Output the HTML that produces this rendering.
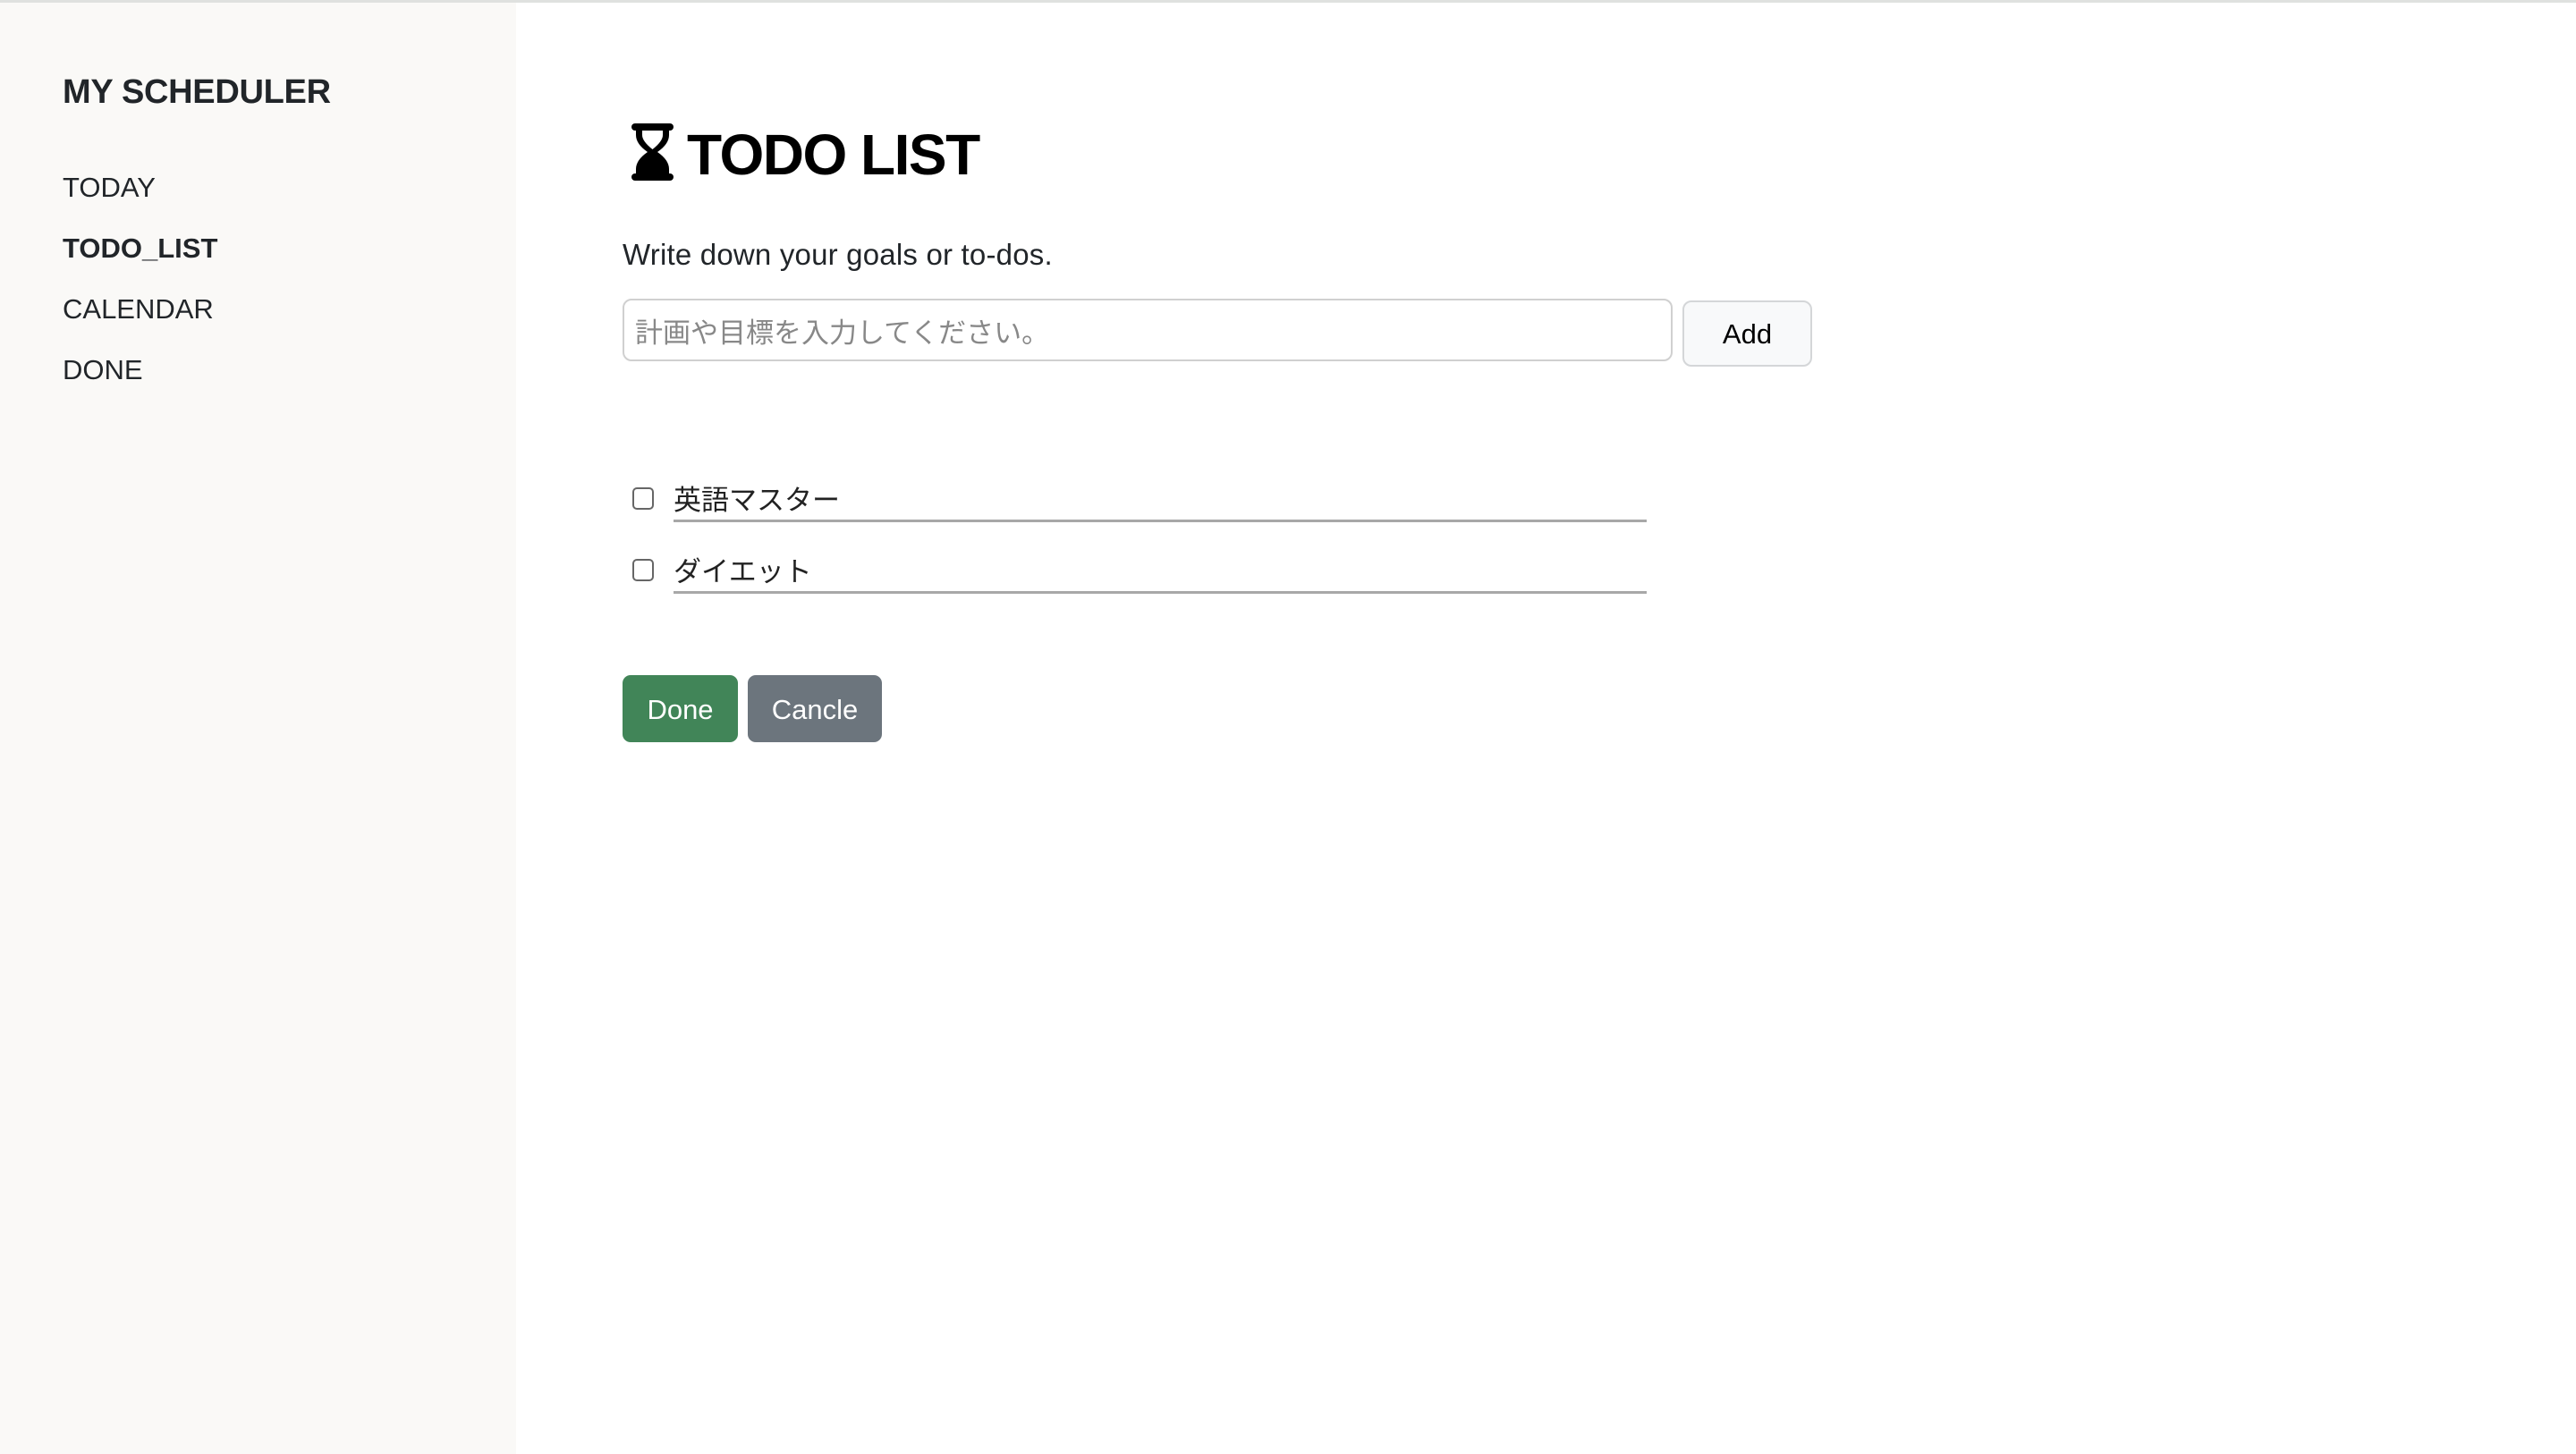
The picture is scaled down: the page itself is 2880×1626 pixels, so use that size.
<!DOCTYPE html>
<html><head><meta charset="utf-8">
<style>
*{box-sizing:border-box;margin:0;padding:0}
html,body{width:2880px;height:1626px;overflow:hidden;background:#fff;font-family:"Liberation Sans","Noto Sans CJK JP",sans-serif;color:#212529}
.top{position:absolute;left:0;top:0;width:2880px;height:3px;background:#dfe1df}
.side{position:absolute;left:0;top:3px;width:577px;height:1623px;background:#faf9f7}
.brand{position:absolute;left:70px;top:82px;font-size:38px;font-weight:bold;letter-spacing:-0.3px}
.nav{position:absolute;left:70px;font-size:31px}
.nav.b{font-weight:bold}
h1{position:absolute;left:768px;top:136px;font-size:64px;font-weight:bold;color:#000;letter-spacing:-1.5px}
.sub{position:absolute;left:696px;top:266px;font-size:33px;letter-spacing:0.2px}
.inp{position:absolute;left:696px;top:334px;width:1174px;height:70px;border:2px solid #d0d0d0;border-radius:10px;font-size:31px;color:#888;padding:11px 0 0 12px}
.add{position:absolute;left:1881px;top:336px;width:145px;height:74px;border:2px solid #d4d6d8;border-radius:10px;background:#f8f9fa;font-size:31px;text-align:center;line-height:72px;color:#000}
.cb{position:absolute;left:707px;width:24px;height:25px;border:2px solid #666;border-radius:5px;background:#fff}
.item{position:absolute;left:753px;font-size:31px;color:#222}
.line{position:absolute;left:753px;width:1088px;height:3px;background:#a8a8a8}
.btn{position:absolute;top:755px;height:75px;border-radius:9px;color:#fff;font-size:31px;text-align:center;line-height:77px}
</style></head><body>
<div class="top"></div>
<div class="side"></div>
<div class="brand">MY SCHEDULER</div>
<div class="nav" style="top:192px">TODAY</div>
<div class="nav b" style="top:260px">TODO_LIST</div>
<div class="nav" style="top:328px">CALENDAR</div>
<div class="nav" style="top:396px">DONE</div>
<svg style="position:absolute;left:705px;top:137px" width="49" height="66" viewBox="0 0 49 66">
<rect x="1" y="1" width="47" height="8" rx="4" fill="#000"/>
<rect x="1" y="57" width="47" height="8" rx="4" fill="#000"/>
<path d="M6 8 L6 14 Q6 24 19 33 Q6 42 6 52 L6 58 L43 58 L43 52 Q43 42 30 33 Q43 24 43 14 L43 8 Z" fill="#000"/>
<path d="M13 9 L13 14 Q13 21 24.5 30 Q36 21 36 14 L36 9 Z" fill="#fff"/>
<path d="M24.5 36 Q13 44 13 52 L14 51 Q24 44 24.5 36 Z" fill="#000"/>
</svg>
<h1>TODO LIST</h1>
<div class="sub">Write down your goals or to-dos.</div>
<div class="inp">計画や目標を入力してください。</div>
<div class="add">Add</div>
<div class="cb" style="top:545px"></div>
<div class="item" style="top:534px">英語マスター</div>
<div class="line" style="top:581px"></div>
<div class="cb" style="top:625px"></div>
<div class="item" style="top:614px">ダイエット</div>
<div class="line" style="top:661px"></div>
<div class="btn" style="left:696px;width:129px;background:#418558">Done</div>
<div class="btn" style="left:836px;width:150px;background:#6c757d">Cancle</div>
</body></html>
